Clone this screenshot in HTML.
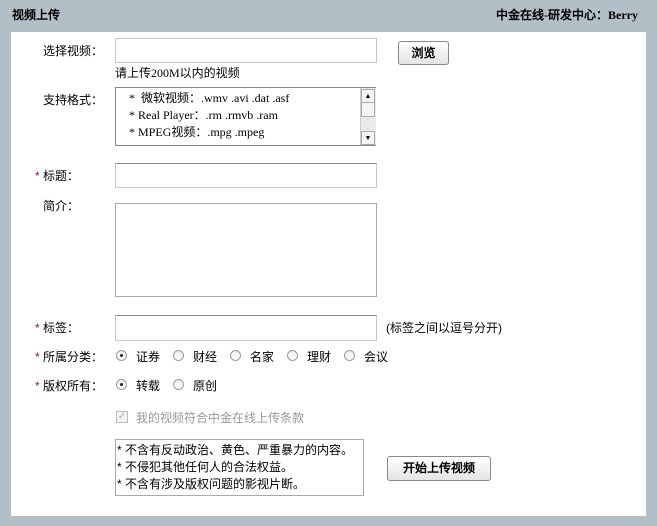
<!DOCTYPE html>
<html><head><meta charset="utf-8"><style>
body{margin:0;width:657px;height:526px;background:#b3bfc7;font-family:"Liberation Serif","WenQuanYi Zen Hei",sans-serif;font-size:12px;color:#000;position:relative;overflow:hidden}
.a{position:absolute;white-space:nowrap}
.panel{position:absolute;left:11px;top:32px;width:635px;height:484px;background:#fff}
.in{position:absolute;background:#fff;border:1px solid #c8c8c8;box-sizing:border-box}
.btn{position:absolute;border:1px solid #8a8a8a;border-radius:3px;background:linear-gradient(#fff,#e4e4e4);font-weight:bold;text-align:center;box-sizing:border-box;font-size:12px;font-family:"WenQuanYi Zen Hei",sans-serif}
.lab{font-family:"WenQuanYi Zen Hei",sans-serif;font-size:12px}
.r{position:absolute;width:11px;height:11px;border:1px solid #999;border-radius:50%;background:linear-gradient(#eee,#fff);box-sizing:border-box}
.r.on::after{content:"";position:absolute;left:3px;top:3px;width:3px;height:3px;border-radius:50%;background:#222}
.s{color:#b0102a}
</style></head><body>
<div class="a" style="left:12px;top:6px;font-weight:bold;font-family:'WenQuanYi Zen Hei',sans-serif">视频上传</div>
<div class="a" style="right:19px;top:6px;font-weight:bold;font-family:'Liberation Serif','WenQuanYi Zen Hei',serif">中金在线-研发中心：Berry</div>
<div class="panel"></div>
<div class="a lab" style="left:43px;top:42px">选择视频：</div>
<div class="in" style="left:115px;top:38px;width:262px;height:25px"></div>
<div class="btn" style="left:398px;top:41px;width:51px;height:24px;line-height:22px">浏览</div>
<div class="a" style="left:115px;top:64px">请上传200M以内的视频</div>
<div class="a lab" style="left:43px;top:91px">支持格式：</div>
<div class="in" style="left:115px;top:87px;width:261px;height:59px;border-color:#888"></div>
<div class="a" style="left:129px;top:90px;line-height:17px">*&nbsp; 微软视频：.wmv .avi .dat .asf<br>* Real Player：.rm .rmvb .ram<br>* MPEG视频：.mpg .mpeg</div>
<div class="a" style="left:360px;top:88px;width:15px;height:57px;background:#eaeaea;border-left:1px solid #ccc"></div>
<div class="a" style="left:361px;top:89px;width:12px;height:12px;background:#f4f4f4;border:1px solid #aaa;font-size:7px;text-align:center;line-height:12px">▲</div>
<div class="a" style="left:361px;top:102px;width:12px;height:13px;background:#f4f4f4;border:1px solid #aaa"></div>
<div class="a" style="left:361px;top:131px;width:12px;height:12px;background:#f4f4f4;border:1px solid #aaa;font-size:7px;text-align:center;line-height:12px">▼</div>
<div class="a lab" style="left:35px;top:167px"><span class="s">*</span> 标题：</div>
<div class="in" style="left:115px;top:163px;width:262px;height:25px;border-top-color:#888"></div>
<div class="a lab" style="left:43px;top:197px">简介：</div>
<div class="in" style="left:115px;top:203px;width:262px;height:94px;border-color:#aaa"></div>
<div class="a lab" style="left:35px;top:319px"><span class="s">*</span> 标签：</div>
<div class="in" style="left:115px;top:315px;width:262px;height:26px;border-top-color:#888"></div>
<div class="a lab" style="left:386px;top:319px">(标签之间以逗号分开)</div>
<div class="a lab" style="left:35px;top:348px"><span class="s">*</span> 所属分类：</div>
<div class="r on" style="left:116px;top:350px"></div><div class="a lab" style="left:136px;top:348px">证券</div>
<div class="r" style="left:173px;top:350px"></div><div class="a lab" style="left:193px;top:348px">财经</div>
<div class="r" style="left:230px;top:350px"></div><div class="a lab" style="left:250px;top:348px">名家</div>
<div class="r" style="left:287px;top:350px"></div><div class="a lab" style="left:307px;top:348px">理财</div>
<div class="r" style="left:344px;top:350px"></div><div class="a lab" style="left:364px;top:348px">会议</div>
<div class="a lab" style="left:35px;top:377px"><span class="s">*</span> 版权所有：</div>
<div class="r on" style="left:116px;top:379px"></div><div class="a lab" style="left:136px;top:377px">转载</div>
<div class="r" style="left:173px;top:379px"></div><div class="a lab" style="left:193px;top:377px">原创</div>
<div class="a" style="left:116px;top:411px;width:12px;height:12px;border:1px solid #bbb;box-sizing:border-box;background:#f4f4f4;color:#aaa;font-size:10px;line-height:10px;text-align:center">✓</div>
<div class="a lab" style="left:136px;top:409px;color:#999">我的视频符合中金在线上传条款</div>
<div class="in" style="left:115px;top:439px;width:249px;height:57px;border-color:#aaa"></div>
<div class="a lab" style="left:117px;top:442px;line-height:17px">* 不含有反动政治、黄色、严重暴力的内容。<br>* 不侵犯其他任何人的合法权益。<br>* 不含有涉及版权问题的影视片断。</div>
<div class="btn" style="left:387px;top:456px;width:104px;height:25px;line-height:23px">开始上传视频</div>
</body></html>
